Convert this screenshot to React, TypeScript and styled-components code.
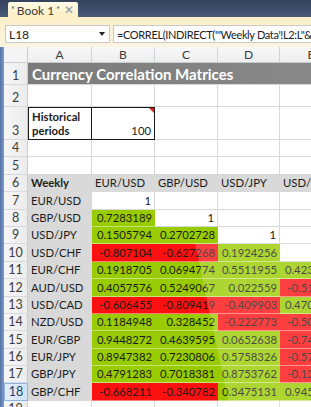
import React from 'react';
import styled, { createGlobalStyle, css } from 'styled-components';

const GlobalStyle = createGlobalStyle`
  html, body { margin: 0; padding: 0; }
  body {
    width: 311px; height: 407px; overflow: hidden; background: #fff;
    font-family: Lato, "Liberation Sans", sans-serif;
  }
`;

const Window = styled.div`
  width: 311px; height: 407px; display: flex; flex-direction: column; overflow: hidden;
`;

const TabBar = styled.div`
  height: 17px; flex: none; display: flex; align-items: flex-end; padding-left: 8px;
  background: linear-gradient(#34425d, #4a5a77);
`;

const Tab = styled.div`
  width: 70px; height: 15px; box-sizing: border-box; display: flex; align-items: center;
  padding: 1px 4px 0 3px; gap: 2px;
  background: linear-gradient(#fffbe8, #fdeec2);
  border-radius: 2px 2px 0 0;
  font-size: 12px; color: #3a3a3a;
`;

const Star = styled.span`
  font-size: 9px; color: #555; align-self: flex-start; margin-top: 1px;
`;

const TabClose = styled.span`
  margin-left: auto; font-size: 12px; color: #8a95a8; line-height: 1;
`;

const FormulaArea = styled.div`
  height: 30px; flex: none; box-sizing: border-box; display: flex; gap: 3px;
  padding: 8px 0 4px 5px;
  background: linear-gradient(#fdefc8, #fbf4e2);
`;

const Box = styled.div<{ $w?: number }>`
  height: 18px; box-sizing: border-box; background: #fff; border: 1px solid #c9c9c9;
  display: flex; align-items: center; padding: 0 3px; color: #222;
  white-space: nowrap; overflow: hidden;
  ${(p) =>
    p.$w
      ? css`width: ${p.$w}px; flex: none; font-size: 12px;`
      : css`flex: 1; border-right: none; font-size: 11px; letter-spacing: -0.35px;`}
`;

const Arrow = styled.span`
  margin-left: auto; width: 0; height: 0; margin-right: 1px;
  border-left: 3.5px solid transparent; border-right: 3.5px solid transparent; border-top: 4px solid #222;
`;

const Sheet = styled.div`
  flex: 1; display: flex; min-height: 0; position: relative;
`;

const Frame = styled.div`
  width: 4px; flex: none; background: linear-gradient(90deg, #5573a8, #7f9cc8);
`;

const Grid = styled.div`
  flex: 1; display: grid; overflow: hidden; position: relative;
  grid-template-columns: 24px 64px 63px 63px 62px 63px;
  grid-template-rows: 16px 22px 22px 33px repeat(16, 17.4px);
  align-content: start;
`;

const Corner = styled.div`
  background: #f4f4f4; border-right: 1px solid #c8ccd2; border-bottom: 1px solid #c8ccd2;
  box-sizing: border-box;
`;

const ColHeader = styled.div`
  box-sizing: border-box; background: linear-gradient(#f8f8f8, #eeeeee);
  border-right: 1px solid #d0d3d8; border-bottom: 1px solid #c8ccd2;
  display: flex; align-items: center; justify-content: center;
  font-size: 12px; color: #3c3c3c;
`;

const RowHeader = styled.div<{ $sel?: boolean }>`
  box-sizing: border-box; display: flex; align-items: flex-end; justify-content: center;
  padding-bottom: 1px; font-size: 12.5px; line-height: 14px;
  border-right: 1px solid #c8ccd2; border-bottom: 1px solid #d6d9de;
  background: ${(p) => (p.$sel ? 'linear-gradient(90deg, #e3effb, #cfe3f7)' : 'linear-gradient(90deg, #f6f6f6, #ececec)')};
  color: ${(p) => (p.$sel ? '#1f3d66' : '#3c3c3c')};
  ${(p) => p.$sel && css`border: 1px solid #8db4e2;`}
`;

type Fill = 'white' | 'green' | 'red' | 'gray';
const fills: Record<Fill, string> = {
  white: '#ffffff',
  green: '#99cc00',
  red: '#ff1010',
  gray: '#d9d9d9',
};

const Cell = styled.div<{ $fill?: Fill; $right?: boolean; $bold?: boolean }>`
  box-sizing: border-box; display: flex; align-items: flex-end;
  padding: 0 3px 1px 3px; white-space: nowrap; overflow: visible;
  font-size: 11.3px; line-height: 14px; color: #1b1b1b;
  justify-content: ${(p) => (p.$right ? 'flex-end' : 'flex-start')};
  font-weight: ${(p) => (p.$bold ? 700 : 400)};
  background: ${(p) => fills[p.$fill || 'white']};
  ${(p) =>
    !p.$fill || p.$fill === 'white'
      ? css`border-right: 1px solid #d8d8d8; border-bottom: 1px solid #d8d8d8;`
      : p.$fill === 'gray'
      ? css`border-bottom: 1px solid #d9d9d9;`
      : css`border-bottom: 1px solid rgba(255, 255, 255, 0.45);`}
`;

const Title = styled.div`
  grid-column: span 5; background: linear-gradient(90deg, #7b7b7b, #8a8a8a);
  color: #fff; font-weight: 700; font-size: 15px; display: flex; align-items: center;
  padding: 1px 4px 0 4px; white-space: nowrap; border-bottom: 1px solid #d8d8d8; box-sizing: border-box;
`;

const BoxedCell = styled.div<{ $first?: boolean }>`
  box-sizing: border-box; border: 1px solid #1a1a1a; ${(p) => !p.$first && css`border-left: none;`}
  display: flex; position: relative; font-size: 11.3px; color: #1b1b1b;
  padding: 2px 3px 1px 3px; line-height: 14px;
  ${(p) =>
    p.$first
      ? css`flex-direction: column; justify-content: flex-start; font-weight: 700;`
      : css`align-items: flex-end; justify-content: flex-end;`}
`;

const CommentMark = styled.span`
  position: absolute; top: 0; right: 0; width: 0; height: 0;
  border-top: 5px solid #e0201b; border-left: 5px solid transparent;
`;

const Glare = styled.div`
  position: absolute; inset: 0; pointer-events: none;
  background: rgba(255, 255, 255, 0.2);
  clip-path: polygon(191px 196px, 311px 196px, 311px 400px, 234px 400px);
`;

const cols = ['A', 'B', 'C', 'D', 'E'];
const pairs = ['EUR/USD', 'GBP/USD', 'USD/JPY', 'USD/CHF', 'EUR/CHF', 'AUD/USD', 'USD/CAD', 'NZD/USD', 'EUR/GBP', 'EUR/JPY', 'GBP/JPY', 'GBP/CHF'];
const values: string[][] = [
  ['1'],
  ['0.7283189', '1'],
  ['0.1505794', '0.2702728', '1'],
  ['-0.807104', '-0.627268', '0.1924256', '1'],
  ['0.1918705', '0.0694774', '0.5511955', '0.4231866'],
  ['0.4057576', '0.5249067', '0.022559', '-0.516239'],
  ['-0.606455', '-0.809419', '-0.409903', '0.4708132'],
  ['0.1184948', '0.328452', '-0.222773', '-0.503172'],
  ['0.9448272', '0.4639595', '0.0652638', '-0.744815'],
  ['0.8947382', '0.7230806', '0.5758326', '-0.573927'],
  ['0.4791283', '0.7018381', '0.8753762', '-0.132084'],
  ['-0.668211', '-0.340782', '0.3475131', '0.9457312'],
];

const fillFor = (v?: string): Fill => {
  if (!v || v === '1') return 'white';
  return v.startsWith('-') ? 'red' : 'green';
};

export default function App() {
  return (
    <>
      <GlobalStyle />
      <Window>
        <TabBar>
          <Tab>
            <Star>*</Star>
            <span>Book 1</span>
            <Star>*</Star>
            <TabClose>✕</TabClose>
          </Tab>
        </TabBar>
        <FormulaArea>
          <Box $w={105}>
            L18
            <Arrow />
          </Box>
          <Box>=CORREL(INDIRECT("'Weekly Data'!L2:L"&amp;2+$B$3),INDIRECT("'Weekly Data'!</Box>
        </FormulaArea>
        <Sheet>
          <Frame />
          <Grid>
            <Corner />
            {cols.map((c) => (
              <ColHeader key={c}>{c}</ColHeader>
            ))}

            <RowHeader>1</RowHeader>
            <Title>Currency Correlation Matrices</Title>

            <RowHeader>2</RowHeader>
            {cols.map((c) => (
              <Cell key={c} />
            ))}

            <RowHeader>3</RowHeader>
            <BoxedCell $first>
              <span>Historical</span>
              <span>periods</span>
            </BoxedCell>
            <BoxedCell>
              100
              <CommentMark />
            </BoxedCell>
            <Cell />
            <Cell />
            <Cell />

            {[4, 5].map((n) => (
              <React.Fragment key={n}>
                <RowHeader>{n}</RowHeader>
                {cols.map((c) => (
                  <Cell key={c} />
                ))}
              </React.Fragment>
            ))}

            <RowHeader>6</RowHeader>
            <Cell $fill="gray" $bold>Weekly</Cell>
            {pairs.slice(0, 4).map((p) => (
              <Cell key={p} $fill="gray">{p}</Cell>
            ))}

            {pairs.map((p, i) => (
              <React.Fragment key={p}>
                <RowHeader $sel={i + 7 === 18}>{i + 7}</RowHeader>
                <Cell $fill="gray">{p}</Cell>
                {[0, 1, 2, 3].map((j) => {
                  const v = values[i][j];
                  return (
                    <Cell key={j} $fill={fillFor(v)} $right>
                      {v}
                    </Cell>
                  );
                })}
              </React.Fragment>
            ))}

            <RowHeader>19</RowHeader>
            {cols.map((c) => (
              <Cell key={c} />
            ))}
            <Glare />
          </Grid>
        </Sheet>
      </Window>
    </>
  );
}
